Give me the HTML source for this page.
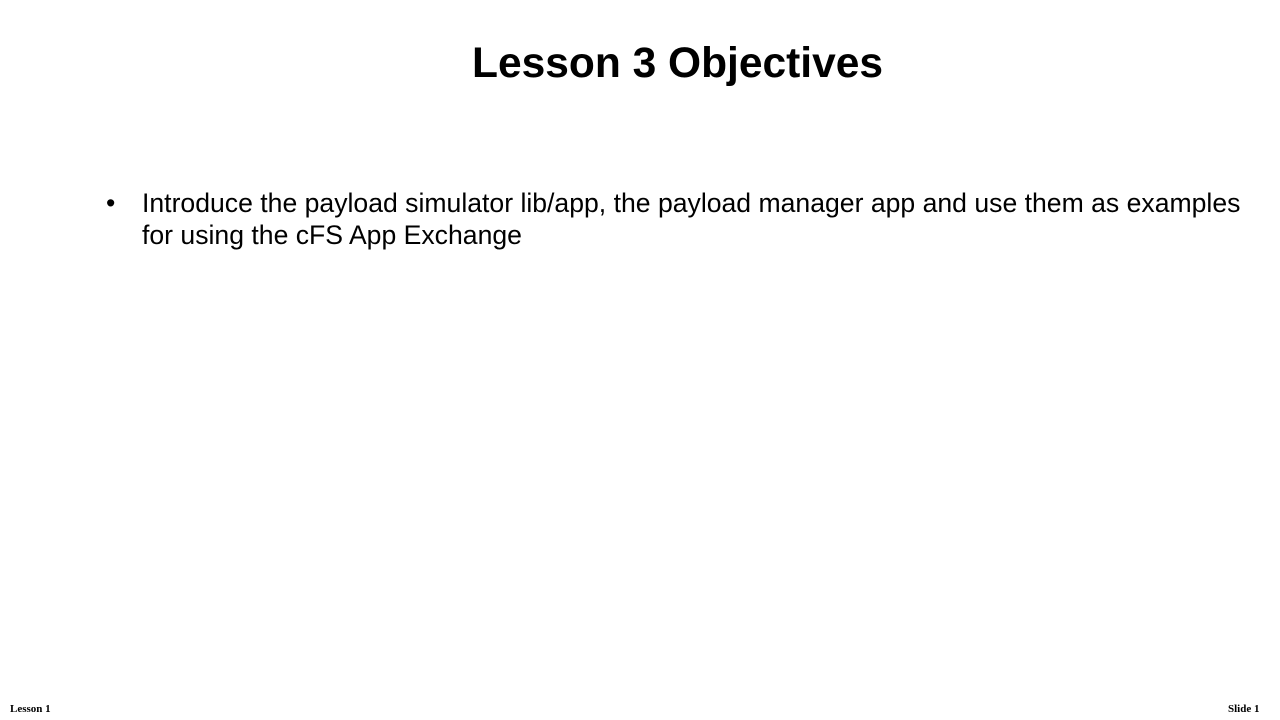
<!DOCTYPE html>
<html><head><meta charset="utf-8"><style>
html,body{margin:0;padding:0;background:#fff;width:1280px;height:720px;overflow:hidden;position:relative;font-family:"Liberation Sans",sans-serif;color:#000}
.t{position:absolute;left:0;width:1355px;text-align:center;top:37px;font-size:42.5px;font-weight:bold;line-height:54px}
.b{position:absolute;left:106px;top:187px;font-size:26.6px;line-height:32px}
.b .d{position:absolute;left:0;top:0}
.b .x{position:absolute;left:36px;top:0;width:1120px}
.f{position:absolute;top:703px;font-family:"Liberation Serif",serif;font-weight:bold;font-size:11px}
</style></head><body>
<div class="t">Lesson 3 Objectives</div>
<div class="b"><span class="d">•</span><div class="x">Introduce the payload simulator lib/app, the payload manager app and use them as examples for using the cFS App Exchange</div></div>
<div class="f" style="left:10px">Lesson 1</div>
<div class="f" style="left:1228px">Slide 1</div>
</body></html>
